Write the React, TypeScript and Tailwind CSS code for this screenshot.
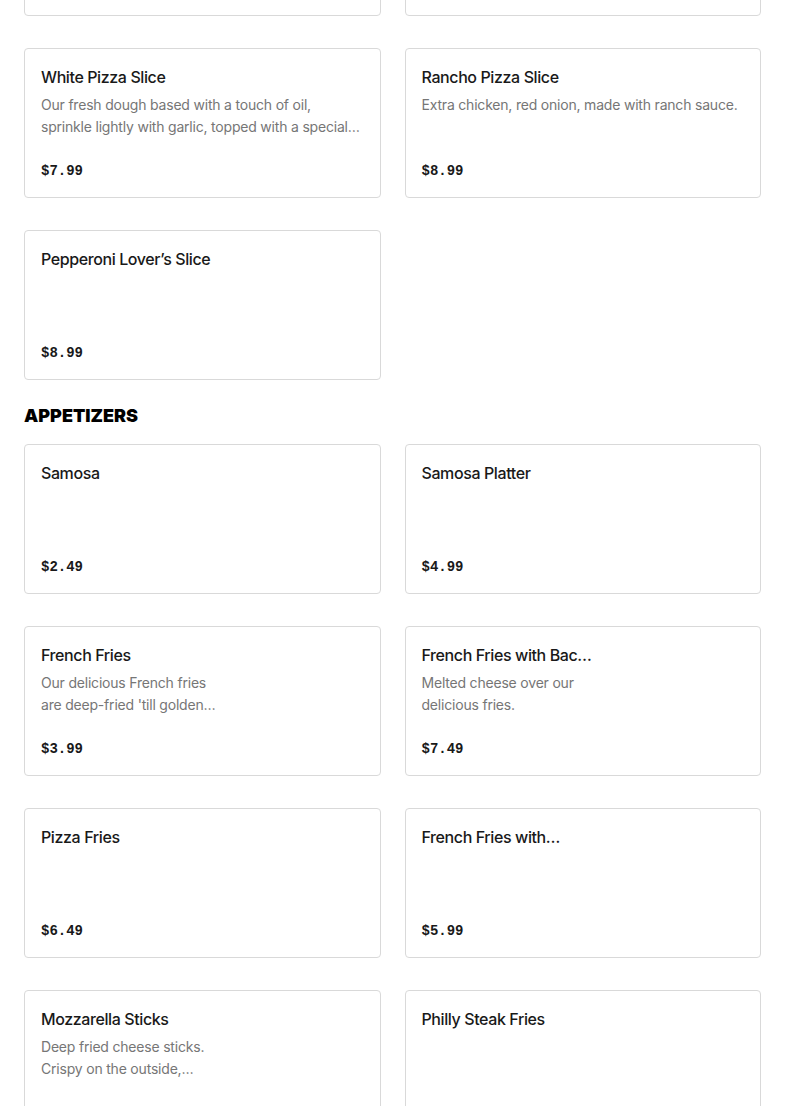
type Item = { name: string; desc?: string[]; price: string };

const slices: Item[] = [
  {
    name: "White Pizza Slice",
    desc: ["Our fresh dough based with a touch of oil,", "sprinkle lightly with garlic, topped with a special…"],
    price: "$7.99",
  },
  { name: "Rancho Pizza Slice", desc: ["Extra chicken, red onion, made with ranch sauce."], price: "$8.99" },
  { name: "Pepperoni Lover’s Slice", price: "$8.99" },
];

const appetizers: Item[] = [
  { name: "Samosa", price: "$2.49" },
  { name: "Samosa Platter", price: "$4.99" },
  { name: "French Fries", desc: ["Our delicious French fries", "are deep-fried 'till golden…"], price: "$3.99" },
  { name: "French Fries with Bac…", desc: ["Melted cheese over our", "delicious fries."], price: "$7.49" },
  { name: "Pizza Fries", price: "$6.49" },
  { name: "French Fries with…", price: "$5.99" },
  { name: "Mozzarella Sticks", desc: ["Deep fried cheese sticks.", "Crispy on the outside,…"], price: "$6.99" },
  { name: "Philly Steak Fries", price: "$8.99" },
];

function Card({ item }: { item: Item }) {
  return (
    <div className="h-[150px] rounded-[4px] border border-[#d9d9d9] bg-white p-4 flex flex-col">
      <div className="text-[16px] leading-6 font-medium tracking-[-0.4px] text-[#191919] whitespace-nowrap">
        {item.name}
      </div>
      {item.desc && (
        <div className="mt-[5px] text-[14px] leading-[22px] tracking-[-0.2px] text-[#767676]">
          {item.desc.map((line) => (
            <div key={line} className="whitespace-nowrap">
              {line}
            </div>
          ))}
        </div>
      )}
      <div className="mt-auto text-[14px] leading-5 font-bold text-[#191919] font-['Liberation_Mono',monospace]">
        {item.price}
      </div>
    </div>
  );
}

export default function App() {
  return (
    <main className="min-h-screen bg-white px-6 overflow-hidden font-['Inter',sans-serif]">
      {/* previous row, scrolled mostly out of view */}
      <div className="-mt-[134px] grid grid-cols-2 gap-x-6 gap-y-8">
        <div className="h-[150px] rounded-[4px] border border-[#d9d9d9] bg-white" />
        <div className="h-[150px] rounded-[4px] border border-[#d9d9d9] bg-white" />
        {slices.map((item) => (
          <Card key={item.name} item={item} />
        ))}
      </div>

      {/* Appetizers */}
      <h2 className="mt-6 mb-4 text-[18px] leading-6 font-black text-black">APPETIZERS</h2>
      <div className="grid grid-cols-2 gap-x-6 gap-y-8 pb-8">
        {appetizers.map((item) => (
          <Card key={item.name} item={item} />
        ))}
      </div>
    </main>
  );
}
